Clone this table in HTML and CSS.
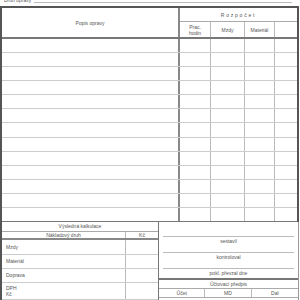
FILE: index.html
```html
<!DOCTYPE html>
<html lang="cs">
<head>
<meta charset="utf-8">
<link rel="stylesheet" href="styles.css">
</head>
<body>
<div class="top">
  <span class="top-label">Druh opravy</span>
  <span class="top-fill"></span>
</div>
<div class="sheet">
  <div class="grid">
    <div class="h-popis">Popis opravy</div>
    <div class="h-rozpocet">Rozpočet</div>
    <div class="h-sub c1">Prac.<br>hodin</div>
    <div class="h-sub c2">Mzdy</div>
    <div class="h-sub c3">Materiál</div>
    <div class="h-sub c4"></div>
  </div>
  <div class="rows" id="rows">
    <div class="r"><i class="d"></i><i></i><i></i><i></i><i class="e"></i></div>
    <div class="r"><i class="d"></i><i></i><i></i><i></i><i class="e"></i></div>
    <div class="r"><i class="d"></i><i></i><i></i><i></i><i class="e"></i></div>
    <div class="r"><i class="d"></i><i></i><i></i><i></i><i class="e"></i></div>
    <div class="r"><i class="d"></i><i></i><i></i><i></i><i class="e"></i></div>
    <div class="r"><i class="d"></i><i></i><i></i><i></i><i class="e"></i></div>
    <div class="r"><i class="d"></i><i></i><i></i><i></i><i class="e"></i></div>
    <div class="r"><i class="d"></i><i></i><i></i><i></i><i class="e"></i></div>
    <div class="r"><i class="d"></i><i></i><i></i><i></i><i class="e"></i></div>
    <div class="r"><i class="d"></i><i></i><i></i><i></i><i class="e"></i></div>
    <div class="r"><i class="d"></i><i></i><i></i><i></i><i class="e"></i></div>
    <div class="r"><i class="d"></i><i></i><i></i><i></i><i class="e"></i></div>
    <div class="r"><i class="d"></i><i></i><i></i><i></i><i class="e"></i></div>
  </div>
</div>
<div class="bottom">
  <div class="calc">
    <div class="calc-title">Výsledná kalkulace</div>
    <div class="calc-row calc-head"><span class="k-name">Nákladový druh</span><span class="k-val">Kč</span></div>
    <div class="calc-row r15"><span class="k-left">Mzdy</span><span class="k-val"></span></div>
    <div class="calc-row r14"><span class="k-left">Materiál</span><span class="k-val"></span></div>
    <div class="calc-row r14"><span class="k-left">Doprava</span><span class="k-val"></span></div>
    <div class="calc-row r16"><span class="k-left">DPH<br>Kč</span><span class="k-val"></span></div>
  </div>
  <div class="sign">
    <div class="sig first">sestavil</div>
    <div class="sig">kontroloval</div>
    <div class="sig last">pokl. převzal dne</div>
    <div class="ucto-title">Účtovací předpis</div>
    <div class="ucto-row"><span>Účet</span><span>MD</span><span>Dal</span></div>
  </div>
</div>
</body>
</html>
```

FILE: styles.css
```css
html, body {
  margin: 0;
  padding: 0;
  background: #fff;
}
body {
  width: 300px;
  height: 300px;
  overflow: hidden;
  font-family: "Liberation Sans", Arial, sans-serif;
  font-size: 5px;
  color: #555;
}
.top {
  height: 6px;
  display: flex;
  align-items: flex-start;
  padding-left: 4px;
  padding-right: 8px;
}
.top-label {
  line-height: 5px;
  margin-top: -2px;
  white-space: nowrap;
}
.top-fill {
  flex: 1;
  height: 2px;
  margin-left: 3px;
  border-bottom: 1px solid #bbb;
}
.sheet {
  width: 295px;
  border-top: 2px solid #555;
  border-left: 2px solid #555;
  border-right: 2px solid #555;
}
.grid {
  display: grid;
  grid-template-columns: 178px 31px 34px 30px 22px;
  grid-template-rows: 14px 15px;
  border-bottom: 2px solid #777;
}
.h-popis {
  grid-row: 1 / 3;
  grid-column: 1;
  border-right: 2px solid #888;
  display: flex;
  align-items: center;
  justify-content: center;
}
.h-rozpocet {
  grid-column: 2 / 6;
  grid-row: 1;
  border-bottom: 1px solid #aaa;
  display: flex;
  align-items: center;
  justify-content: center;
  letter-spacing: 1.8px;
}
.h-sub {
  grid-row: 2;
  display: flex;
  align-items: center;
  justify-content: center;
  text-align: center;
  line-height: 6px;
  border-right: 1px solid #bbb;
}
.h-sub.c4 {
  border-right: none;
}
.rows {
  display: grid;
  grid-template-rows: repeat(13, 14.08px);
}
.r {
  display: grid;
  grid-template-columns: 178px 31px 34px 30px 22px;
  border-bottom: 1px solid #ccc;
  box-sizing: border-box;
}
.r i {
  border-right: 1px solid #bbb;
}
.r i.d {
  border-right: 2px solid #888;
}
.r i.e {
  border-right: none;
}
.r:last-child {
  border-bottom: 1px solid #777;
}
.bottom {
  display: grid;
  grid-template-columns: 158px 141px;
  height: 78px;
}
.calc {
  border-left: 2px solid #555;
  display: flex;
  flex-direction: column;
}
.calc-title {
  height: 9px;
  line-height: 9px;
  text-align: center;
  border-bottom: 1px solid #aaa;
}
.calc-row {
  display: grid;
  grid-template-columns: 124px 1fr;
  border-bottom: 1px solid #ccc;
}
.calc-head {
  height: 6px;
  line-height: 6px;
  border-bottom: 2px solid #888;
}
.k-name {
  text-align: center;
  border-right: 1px solid #bbb;
}
.k-val {
  text-align: center;
}
.k-left {
  border-right: 1px solid #bbb;
  padding-left: 4px;
  display: flex;
  align-items: center;
  line-height: 6.5px;
}
.calc-row.r15 { height: 14px; }
.calc-row.r14 { height: 13px; }
.calc-row.r16 { height: 16px; }
.sign {
  border-left: 1px solid #777;
  border-right: 1px solid #999;
  display: flex;
  flex-direction: column;
}
.sig {
  margin: 0 4px;
  border-top: 1px solid #bbb;
  height: 15px;
  line-height: 8px;
  text-align: center;
}
.sig.first {
  margin-top: 14px;
}
.sig.last {
  height: 9px;
}
.ucto-title {
  border-top: 2px solid #777;
  border-bottom: 1px solid #aaa;
  height: 8px;
  line-height: 8px;
  text-align: center;
}
.ucto-row {
  display: grid;
  grid-template-columns: 1fr 1fr 1fr;
  height: 8px;
  line-height: 8px;
  border-bottom: 1px solid #aaa;
}
.ucto-row span {
  text-align: center;
  border-right: 1px solid #bbb;
}
.ucto-row span:last-child {
  border-right: none;
}
```
